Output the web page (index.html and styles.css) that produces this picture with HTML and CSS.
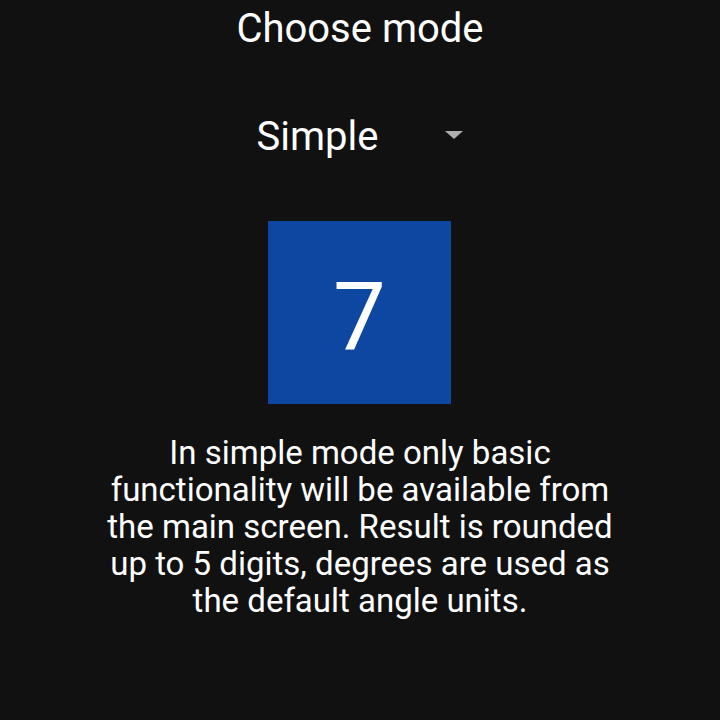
FILE: index.html
```html
<!DOCTYPE html>
<html lang="en">
<head>
  <meta charset="UTF-8">
  <title>Choose mode</title>
  <link rel="stylesheet" href="styles.css">
</head>
<body>
  <div class="screen">
    <h1 class="title">Choose mode</h1>

    <div class="picker">
      <span class="picker-value">Simple</span>
      <span class="picker-arrow"></span>
    </div>

    <div class="preview">7</div>

    <p class="desc">In simple mode only basic functionality will be available from the main screen. Result is rounded up to 5 digits, degrees are used as the default angle units.</p>
  </div>
</body>
</html>
```

FILE: styles.css
```css
html, body { margin: 0; height: 100%; background: #111111; }
body { font-family: Roboto, "Noto Sans", sans-serif; color: #ffffff; }
.screen { display: flex; flex-direction: column; align-items: center; }
.title { font-size: 40px; font-weight: 400; margin: 5px 0 0; line-height: 48px; }
.picker { display: flex; align-items: center; gap: 67px; margin-top: 60px; height: 48px; }
.picker-value { font-size: 40px; line-height: 48px; }
.picker-arrow { width: 0; height: 0; border-left: 9px solid transparent; border-right: 9px solid transparent; border-top: 8px solid #b0b0b0; margin-top: -4px; }
.preview { width: 183px; height: 183px; margin-top: 60px; margin-right: 1px; padding-top: 8px; box-sizing: border-box; background: #0d47a1; display: flex; align-items: center; justify-content: center; font-size: 94px; }
.desc { width: 530px; margin: 30px 0 0; text-align: center; font-size: 33px; line-height: 37px; }
```
